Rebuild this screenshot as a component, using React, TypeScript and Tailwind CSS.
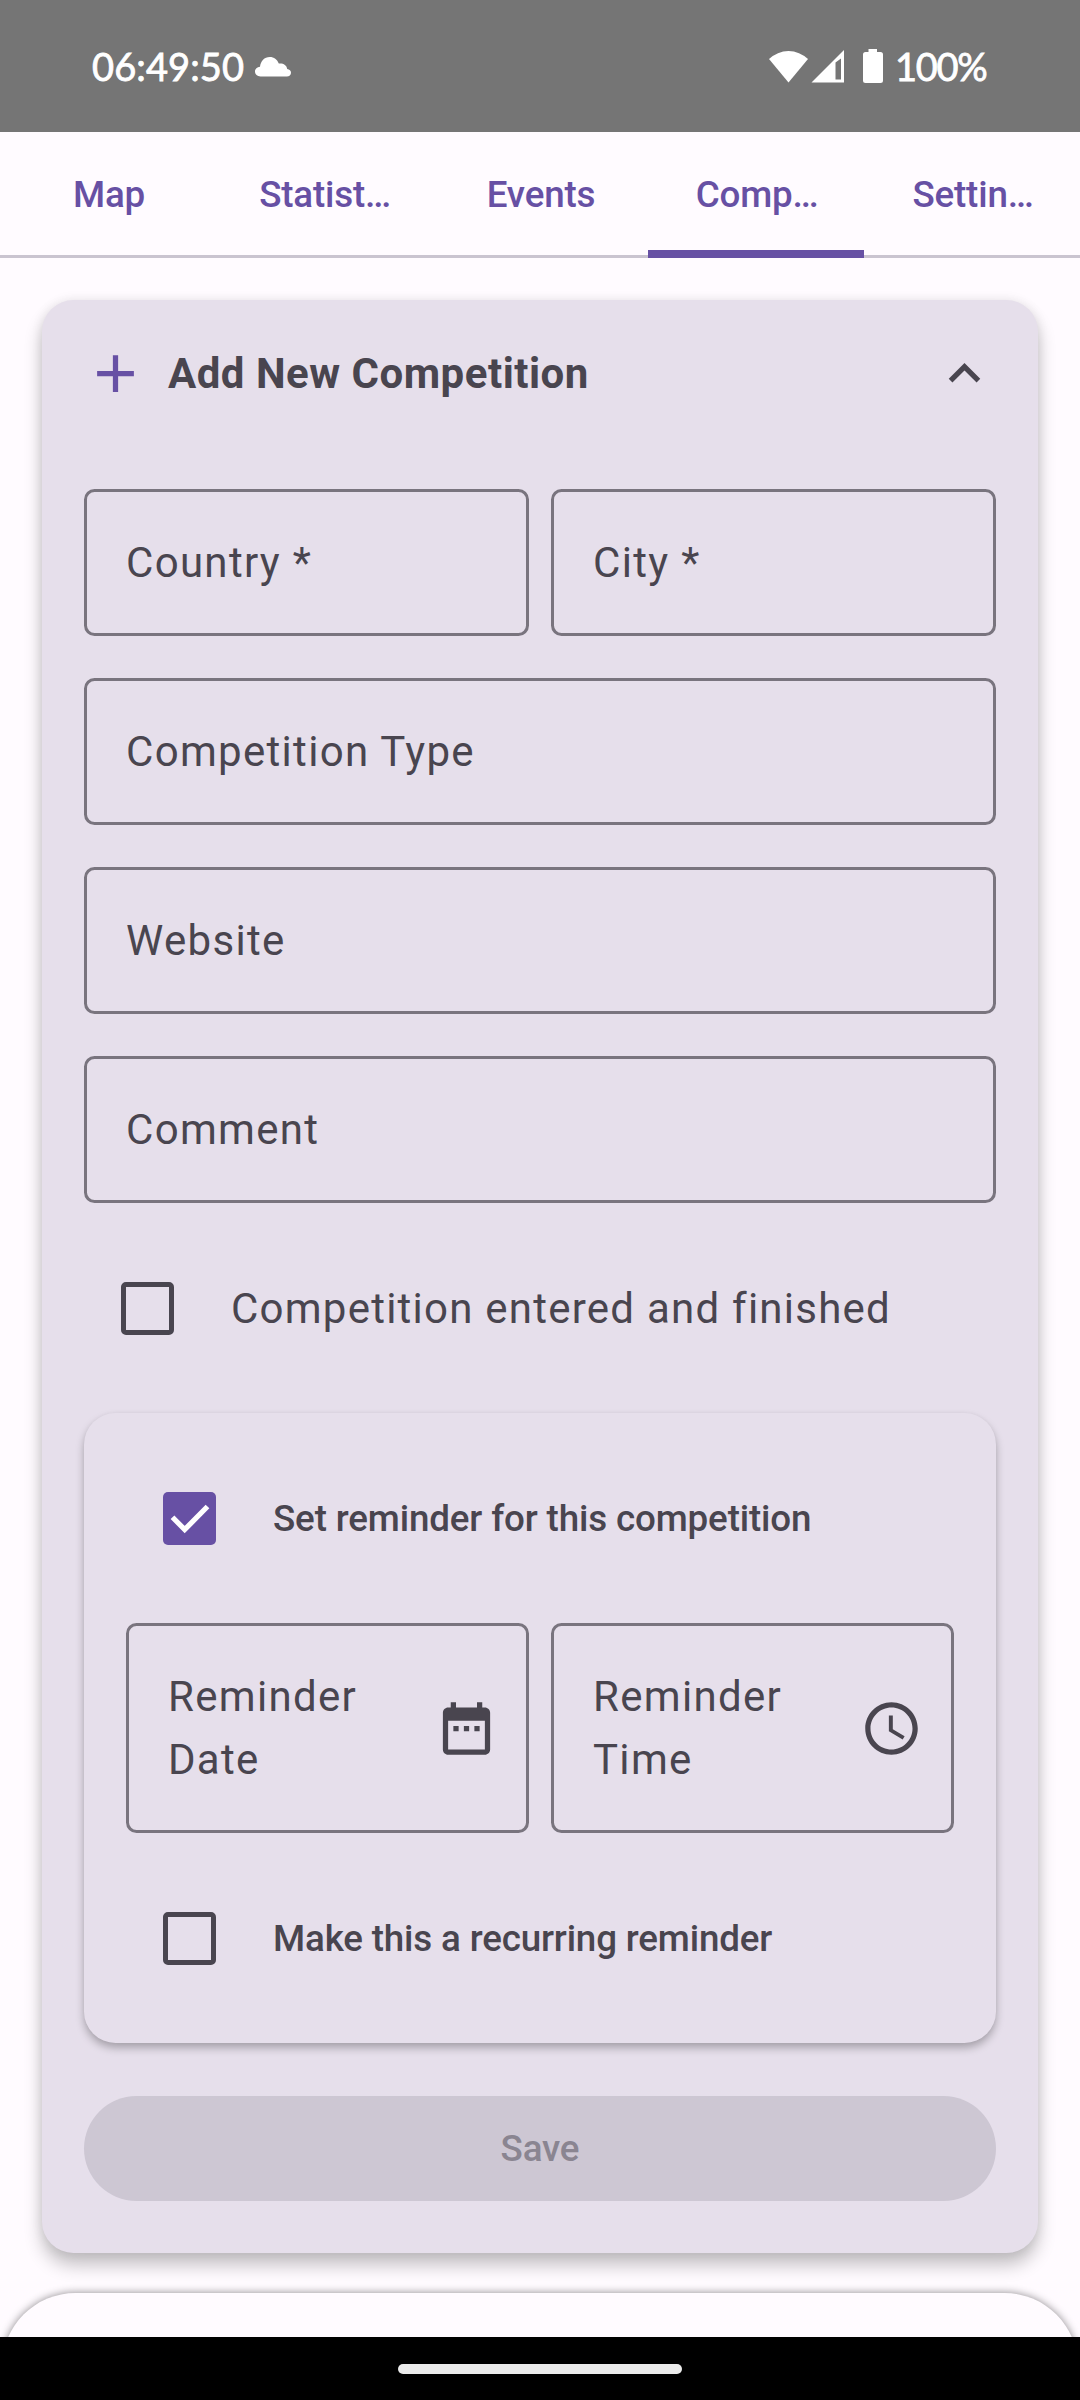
import type { ReactNode } from "react";

const TABS = ["Map", "Statist…", "Events", "Comp…", "Settin…"];
const ACTIVE_TAB = 3;

function StatusBar() {
  return (
    <header className="flex h-[132px] shrink-0 items-center justify-between bg-[#757575] pl-[92px] pr-[93px] font-['Lato',sans-serif] text-[38px] text-white [-webkit-text-stroke:0.8px_white]">
      <div className="flex items-center">
        <span className="w-[163px] leading-[46px] tracking-[0.1px]">06:49:50</span>
        <svg className="h-[22px] w-[36px]" viewBox="0 0 36 22" fill="currentColor">
          <path d="M5.500 21.500C2.300 21.500 0 19.400 0 16.600 0 14 2.200 12 5 11.800 5.600 6.200 9.300 2 14.800 2 18.900 2 22.300 4.500 23.800 8.600 28.200 8.100 31.600 10 32.200 14 34.500 14.200 36 15.700 36 17.700 36 19.900 34.300 21.500 31.800 21.500Z" />
        </svg>
      </div>
      <div className="flex items-center">
        <svg className="h-[34px] w-[115px]" viewBox="0 0 115 34" fill="currentColor">
          <path d="M0 10A28 28 0 0 1 39 10L19.500 33.500Z" />
          <path fillRule="evenodd" d="M42.500 33.500 75 1V33.500ZM66.500 13.500V30.500H72V9.500Z" />
          <path d="M99.500 0h8.500v3h3.500a2.500 2.500 0 0 1 2.500 2.500v26a2.500 2.500 0 0 1-2.500 2.500h-15a2.500 2.500 0 0 1-2.500-2.500V5.500A2.500 2.500 0 0 1 96.500 3h3z" />
        </svg>
        <span className="ml-[11px] w-[92px] leading-[46px] tracking-[-1.300px]">100%</span>
      </div>
    </header>
  );
}

function TabBar() {
  return (
    <nav className="grid h-[126px] shrink-0 grid-cols-5 bg-[linear-gradient(to_top,#cac4d0_3px,transparent_3px)]">
      {TABS.map((label, i) => (
        <button
          key={label}
          className={
            i === ACTIVE_TAB
              ? "border-b-8 border-[#6750a4] pl-[2px] pt-2 text-[36.75px] font-medium tracking-[-0.17px] text-[#6750a4]"
              : "pl-[2px] text-[36.75px] font-medium tracking-[-0.17px] text-[#6750a4]"
          }
        >
          {label}
        </button>
      ))}
    </nav>
  );
}

function Icon({ d, className }: { d: string; className?: string }) {
  return (
    <svg viewBox="0 0 24 24" fill="currentColor" className={`size-[63px] shrink-0 ${className ?? ""}`}>
      <path d={d} />
    </svg>
  );
}

function Field({ label }: { label: string }) {
  return (
    <div className="flex h-[147px] items-center rounded-[10.5px] border-3 border-[#79747e] px-[39px] text-[42px] tracking-[1.31px]">
      {label}
    </div>
  );
}

function PickerField({ label, icon }: { label: string; icon: string }) {
  return (
    <div className="flex h-[210px] items-center rounded-[10.5px] border-3 border-[#79747e] pl-[39px] pr-[28px]">
      <span className="w-[210px] text-[42px] leading-[63px] tracking-[1.31px]">{label}</span>
      <Icon d={icon} className="ml-auto" />
    </div>
  );
}

function CheckRow({ checked, children }: { checked?: boolean; children: ReactNode }) {
  return (
    <div className="flex h-[126px] items-center gap-[21px]">
      <span className="flex size-[126px] items-center justify-center">
        {checked ? (
          <span className="flex size-[53px] items-center justify-center rounded-[5px] bg-[#6750a4]">
            <svg viewBox="0 0 53 53" className="size-[53px]" fill="none" stroke="white" strokeWidth="5.2">
              <path d="M9.500 25.200 21.700 37.600 44.500 14.500" />
            </svg>
          </span>
        ) : (
          <span className="size-[53px] rounded-[5px] border-5 border-[#49454f]" />
        )}
      </span>
      {children}
    </div>
  );
}

const ADD = "M19 13h-6v6h-2v-6H5v-2h6V5h2v6h6v2z";
const EXPAND_LESS = "M12 8l-6 6 1.410 1.410L12 10.830l4.590 4.580L18 14z";
const DATE_RANGE =
  "M9 11H7v2h2v-2zm4 0h-2v2h2v-2zm4 0h-2v2h2v-2zm2-7h-1V2h-2v2H8V2H6v2H5c-1.110 0-1.990.9-1.990 2L3 20c0 1.100.89 2 2 2h14c1.100 0 2-.9 2-2V6c0-1.100-.9-2-2-2zm0 16H5V9h14v11z";
const SCHEDULE =
  "M11.990 2C6.470 2 2 6.480 2 12s4.470 10 9.990 10C17.520 22 22 17.520 22 12S17.520 2 11.990 2zM12 20c-4.420 0-8-3.580-8-8s3.580-8 8-8 8 3.580 8 8-3.580 8-8 8zm.5-13H11v6l5.250 3.150.75-1.230-4.500-2.670z";

export default function App() {
  return (
    <div className="flex h-[2400px] w-[1080px] flex-col overflow-hidden bg-[#fffbff] font-['Roboto',sans-serif] text-[#49454f]">
      <StatusBar />
      <TabBar />
      <main className="flex min-h-0 flex-1 flex-col overflow-hidden pt-[42px]">
        <section className="mx-[42px] h-[1953px] shrink-0 rounded-[31.500px] bg-[#e6dfeb] px-[42px] pt-[42px] shadow-[0_12px_18px_rgba(0,0,0,0.24),0_0_12px_rgba(0,0,0,0.08)]">
          <div className="flex h-[63px] items-center">
            <Icon d={ADD} className="text-[#6750a4]" />
            <h1 className="ml-[21px] text-[42px] font-bold tracking-[0.5px]">Add New Competition</h1>
            <Icon d={EXPAND_LESS} className="ml-auto" />
          </div>

          <div className="mt-[84px] flex flex-col gap-[42px]">
            <div className="grid grid-cols-2 gap-[22px]">
              <Field label="Country *" />
              <Field label="City *" />
            </div>
            <Field label="Competition Type" />
            <Field label="Website" />
            <Field label="Comment" />
            <CheckRow>
              <span className="pt-px text-[42px] tracking-[1.24px]">Competition entered and finished</span>
            </CheckRow>

            <div className="flex flex-col gap-[42px] rounded-[31.500px] bg-[#e6dfeb] p-[42px] shadow-[0_5px_9px_rgba(0,0,0,0.27),0_0_4px_rgba(0,0,0,0.03)]">
              <CheckRow checked>
                <span className="pt-[2px] text-[36.75px] font-medium tracking-[-0.14px]">Set reminder for this competition</span>
              </CheckRow>
              <div className="grid grid-cols-2 gap-[22px]">
                <PickerField label="Reminder Date" icon={DATE_RANGE} />
                <PickerField label="Reminder Time" icon={SCHEDULE} />
              </div>
              <CheckRow>
                <span className="pt-[2px] text-[36.75px] font-medium tracking-[-0.16px]">Make this a recurring reminder</span>
              </CheckRow>
            </div>

            <button className="mt-[11px] flex h-[105px] items-center justify-center rounded-full bg-[#cdc7d3] text-[36.75px] font-medium tracking-[-0.17px] text-[#8a8591]">
              Save
            </button>
          </div>
        </section>

        <section className="mx-[2px] mt-[40px] h-[160px] shrink-0 rounded-t-[73.500px] bg-[#fffbff] shadow-[0_0_9px_rgba(0,0,0,0.45)]" />
      </main>
      <footer className="z-10 flex h-[63px] shrink-0 items-center justify-center bg-black">
        <div className="h-[10px] w-[284px] rounded-full bg-[#ebebeb]" />
      </footer>
    </div>
  );
}
